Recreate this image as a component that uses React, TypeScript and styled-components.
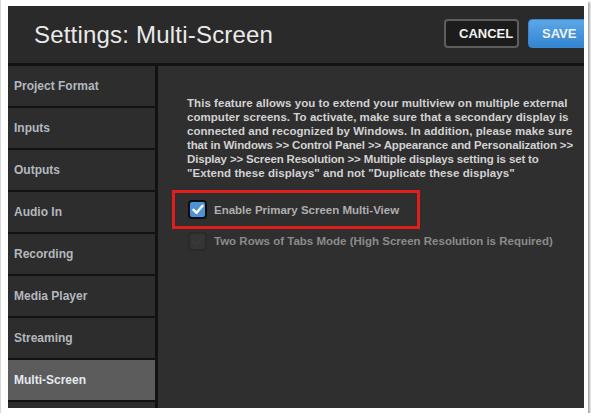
import React from 'react';
import styled, { createGlobalStyle } from 'styled-components';

const GlobalStyle = createGlobalStyle`
  html, body {
    margin: 0;
    padding: 0;
    background: #ffffff;
  }
  body {
    font-family: "Liberation Sans", Arial, sans-serif;
  }
`;

const Frame = styled.div`
  box-sizing: border-box;
  width: 588px;
  height: 413px;
  padding: 6px 5px 5px 7px;
  background: #ffffff;
  border-left: 1px solid #d8d8d8;
  box-shadow: 2px 2px 2px rgba(0, 0, 0, 0.35);
`;

const Window = styled.div`
  display: flex;
  flex-direction: column;
  width: 576px;
  height: 402px;
  overflow: hidden;
  background: #2f2f2f;
`;

const Header = styled.div`
  flex: 0 0 57px;
  display: flex;
  align-items: center;
  justify-content: space-between;
  padding-left: 26px;
  background: #2a2a2a;
  border-bottom: 3px solid #121212;
`;

const Title = styled.h1`
  margin: 0;
  font-size: 24px;
  font-weight: 400;
  color: #e9e9e9;
  letter-spacing: 0.2px;
`;

const Actions = styled.div`
  display: flex;
  gap: 9px;
  margin-right: -6px;
  margin-top: -2px;
`;

const Button = styled.button<{ primary?: boolean }>`
  box-sizing: border-box;
  height: 29px;
  padding: 0 13px;
  border-radius: 4px;
  font-family: "Liberation Sans", Arial, sans-serif;
  font-size: 13px;
  font-weight: 700;
  color: #f2f2f2;
  border: ${p => (p.primary ? '1px solid #3a86cf' : '2px solid #5e5e5e')};
  background: ${p => (p.primary ? 'linear-gradient(#5ba7e8, #3485d0)' : '#1c1c1c')};
  width: ${p => (p.primary ? '62px' : '75px')};
`;

const Body = styled.div`
  flex: 1;
  display: flex;
  min-height: 0;
`;

const Sidebar = styled.div`
  flex: 0 0 147px;
  display: flex;
  flex-direction: column;
  border-right: 3px solid #121212;
`;

const NavItem = styled.div<{ active?: boolean }>`
  flex: 0 0 40px;
  display: flex;
  align-items: center;
  padding-left: 6px;
  border-bottom: 2px solid #121212;
  background: ${p => (p.active ? '#5c5c5c' : '#2d2d2d')};
  color: ${p => (p.active ? '#e4e9f0' : '#b3b8bf')};
  font-size: 12px;
  font-weight: 700;
`;

const Content = styled.div`
  flex: 1;
  min-width: 0;
  padding: 30px 0 0 29px;
  background: #2f2f2f;
`;

const Description = styled.p`
  margin: 0 0 10px;
  white-space: nowrap;
  font-size: 11.5px;
  line-height: 14px;
  font-weight: 700;
  color: #d2d2d2;
`;

const Line = styled.span<{ tight?: boolean }>`
  display: block;
  letter-spacing: ${p => (p.tight ? '-0.15px' : '0.05px')};
`;

const Highlight = styled.div`
  box-sizing: border-box;
  width: 248px;
  height: 39px;
  margin-left: -15px;
  padding-left: 13px;
  display: flex;
  align-items: center;
  border: 3px solid #e11d1d;
`;

const Option = styled.label<{ disabled?: boolean }>`
  display: flex;
  align-items: center;
  gap: 7px;
  font-size: 11.5px;
  font-weight: 700;
  white-space: nowrap;
  color: ${p => (p.disabled ? '#8b8b8b' : '#aeaeae')};
`;

const OptionRow = styled.div`
  display: flex;
  align-items: center;
  height: 22px;
  margin-top: 1px;
  padding-left: 1px;
`;

const Box = styled.span<{ disabled?: boolean }>`
  box-sizing: border-box;
  display: inline-flex;
  align-items: center;
  justify-content: center;
  width: 19px;
  height: 19px;
  border-radius: 4px;
  border: 2px solid ${p => (p.disabled ? '#2a2a2a' : '#0c0c0c')};
  background: ${p => (p.disabled ? '#343434' : '#4c93d8')};
`;

const Check = ({ color }: { color: string }) => (
  <svg width="12" height="11" viewBox="0 0 12 11">
    <path d="M1.5 5.8 L4.6 8.8 L10.5 1.8" fill="none" stroke={color} strokeWidth="2.4" strokeLinecap="round" strokeLinejoin="round" />
  </svg>
);

const navItems = [
  'Project Format',
  'Inputs',
  'Outputs',
  'Audio In',
  'Recording',
  'Media Player',
  'Streaming',
  'Multi-Screen',
  '',
];

const descriptionLines = [
  'This feature allows you to extend your multiview on multiple external',
  'computer screens. To activate, make sure that a secondary display is',
  'connected and recognized by Windows. In addition, please make sure',
  'that in Windows >> Control Panel >> Appearance and Personalization >>',
  'Display >> Screen Resolution >> Multiple displays setting is set to',
  '"Extend these displays" and not "Duplicate these displays"',
];

export default function App() {
  return (
    <>
      <GlobalStyle />
      <Frame>
        <Window>
          <Header>
            <Title>Settings: Multi-Screen</Title>
            <Actions>
              <Button>CANCEL</Button>
              <Button primary>SAVE</Button>
            </Actions>
          </Header>
          <Body>
            <Sidebar>
              {navItems.map((item, i) => (
                <NavItem key={i} active={item === 'Multi-Screen'}>{item}</NavItem>
              ))}
            </Sidebar>
            <Content>
              <Description>
                {descriptionLines.map((line, i) => (
                  <Line key={i} tight={line.includes('>>')}>{line}</Line>
                ))}
              </Description>
              <Highlight>
                <Option>
                  <Box><Check color="#ffffff" /></Box>
                  Enable Primary Screen Multi-View
                </Option>
              </Highlight>
              <OptionRow>
                <Option disabled>
                  <Box disabled><Check color="#393939" /></Box>
                  Two Rows of Tabs Mode (High Screen Resolution is Required)
                </Option>
              </OptionRow>
            </Content>
          </Body>
        </Window>
      </Frame>
    </>
  );
}
